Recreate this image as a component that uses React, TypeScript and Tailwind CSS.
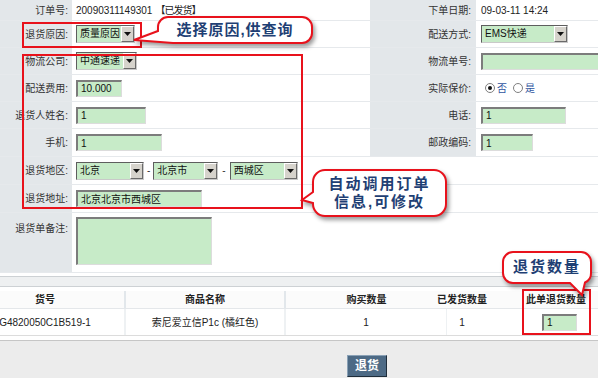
import React from "react";

const Arrow = () => (
  <svg width="7" height="4" viewBox="0 0 7 4">
    <path d="M0 0 H7 L3.5 4 Z" fill="#111" />
  </svg>
);

const Sel = ({ w, text }: { w: string; text: string }) => (
  <div
    className={`flex h-[18px] border border-t-[#5e5e5e] border-l-[#5e5e5e] border-r-[#c9c9c9] border-b-[#c9c9c9] bg-[#c7ebc8] ${w}`}
  >
    <span className="flex-1 pl-[3px] text-[10px] leading-[16px] text-[#111] whitespace-nowrap overflow-hidden">{text}</span>
    <span className="flex w-[13px] items-center justify-center border border-t-white border-l-white border-r-[#6a6a6a] border-b-[#6a6a6a] bg-[#d6d3cc]">
      <Arrow />
    </span>
  </div>
);

const Inp = ({ w, text, h = "h-[17px]" }: { w: string; text?: string; h?: string }) => (
  <div
    className={`flex items-center border-t-2 border-l-2 border-t-[#7c7c7c] border-l-[#7c7c7c] border-b border-r border-b-[#dcdcdc] border-r-[#dcdcdc] bg-[#c7ebc8] pl-[3px] text-[10px] text-[#111] whitespace-nowrap ${w} ${h}`}
  >
    {text}
  </div>
);

const Radio = ({ checked }: { checked?: boolean }) => (
  <span className="flex h-[10px] w-[10px] items-center justify-center rounded-full border border-[#7f7f7f] bg-white">
    {checked && <span className="h-[4px] w-[4px] rounded-full bg-[#111]" />}
  </span>
);

const L = ({ children }: { children: React.ReactNode }) => (
  <div className="flex items-center justify-end bg-[#e3e7ea] pr-[4px] text-[10px] text-[#333] whitespace-nowrap">{children}</div>
);
const L2 = ({ children }: { children: React.ReactNode }) => (
  <div className="flex items-center justify-end bg-[#e3e7ea] pr-[5px] text-[10px] text-[#333] whitespace-nowrap">{children}</div>
);
const V = ({ children }: { children?: React.ReactNode }) => (
  <div className="flex items-center pl-[4px] text-[10px] text-[#222] whitespace-nowrap">{children}</div>
);
const V2 = ({ children }: { children?: React.ReactNode }) => (
  <div className="flex items-center pl-[5px] text-[10px] text-[#222] whitespace-nowrap overflow-hidden">{children}</div>
);

const row = "grid grid-cols-[72px_298px_106px_122px] border-b border-[#e6e9ec]";
const row3 = "grid grid-cols-[72px_526px] border-b border-[#e6e9ec]";

export default function App() {
  return (
    <div className="relative h-[378px] w-[598px] overflow-hidden bg-white font-['Liberation_Sans','Noto_Sans_CJK_SC',sans-serif]">
      {/* form */}
      <div className={`${row} h-[21px]`}>
        <L>订单号:</L>
        <V>
          <span>20090311149301</span>
          <span className="ml-[3px] tracking-[-1px]">【已发货】</span>
        </V>
        <L2>下单日期:</L2>
        <V2>09-03-11 14:24</V2>
      </div>
      <div className={`${row} h-[27px]`}>
        <L>退货原因:</L>
        <V>
          <Sel w="w-[59px]" text="质量原因" />
        </V>
        <L2>配送方式:</L2>
        <V2>
          <Sel w="w-[87px]" text="EMS快递" />
        </V2>
      </div>
      <div className={`${row} h-[27px]`}>
        <L>物流公司:</L>
        <V>
          <Sel w="w-[61px]" text="中通速递" />
        </V>
        <L2>物流单号:</L2>
        <V2>
          <Inp w="w-[130px] shrink-0" />
        </V2>
      </div>
      <div className={`${row} h-[27px]`}>
        <L>配送费用:</L>
        <V>
          <Inp w="w-[46px]" text="10.000" />
        </V>
        <L2>实际保价:</L2>
        <V2>
          <div className="flex items-center pl-[4px]">
            <Radio checked />
            <span className="ml-[2px] text-[#2f54a0]">否</span>
            <span className="ml-[6px]">
              <Radio />
            </span>
            <span className="ml-[2px] text-[#2f54a0]">是</span>
          </div>
        </V2>
      </div>
      <div className={`${row} h-[27px]`}>
        <L>退货人姓名:</L>
        <V>
          <Inp w="w-[70px]" text="1" />
        </V>
        <L2>电话:</L2>
        <V2>
          <Inp w="w-[85px]" text="1" />
        </V2>
      </div>
      <div className={`${row} h-[28px]`}>
        <L>手机:</L>
        <V>
          <Inp w="w-[86px]" text="1" />
        </V>
        <L2>邮政编码:</L2>
        <V2>
          <Inp w="w-[52px]" text="1" />
        </V2>
      </div>
      <div className={`${row3} h-[28px]`}>
        <L>退货地区:</L>
        <V>
          <Sel w="w-[68px]" text="北京" />
          <span className="mx-[3px] text-[#333]">-</span>
          <Sel w="w-[65px]" text="北京市" />
          <span className="mx-[4px] text-[#333]">-</span>
          <Sel w="w-[68px]" text="西城区" />
        </V>
      </div>
      <div className={`${row3} h-[28px]`}>
        <L>退货地址:</L>
        <V>
          <Inp w="w-[126px]" text="北京北京市西城区" />
        </V>
      </div>
      <div className={`${row3} h-[60px]`}>
        <div className="flex justify-end bg-[#e3e7ea] pr-[4px] pt-[8px] text-[10px] text-[#333] whitespace-nowrap">退货单备注:</div>
        <div className="pl-[4px] pt-[4px]">
          <Inp w="w-[136px]" h="h-[48px]" />
        </div>
      </div>

      {/* separator band */}
      <div className="h-[3px]" />
      <div className="h-[11px] border-t border-b border-[#cdd1d4] bg-[#eef0f1]" />
      <div className="h-[4px]" />

      {/* product table */}
      <div className="grid h-[18px] grid-cols-[126px_160px_161px_30px_121px] border-b border-[#e4e7ea] bg-[#fbfbfb] text-[10px] font-bold text-[#222]">
        <div className="flex items-center justify-center border-r-2 border-[#e2e7eb] pr-[34px]">货号</div>
        <div className="flex items-center justify-center border-r-2 border-[#e2e7eb]">商品名称</div>
        <div className="flex items-center justify-center">购买数量</div>
        <div className="flex items-center justify-center whitespace-nowrap">已发货数量</div>
        <div className="flex items-center justify-center whitespace-nowrap pl-[37px]">此单退货数量</div>
      </div>
      <div className="grid h-[27px] grid-cols-[126px_160px_161px_30px_121px] border-b border-[#dcdcdc] text-[10px] text-[#222]">
        <div className="flex items-center justify-center border-r-2 border-[#eef1f3] pr-[34px] whitespace-nowrap">G4820050C1B519-1</div>
        <div className="flex items-center justify-center border-r-2 border-[#eef1f3] whitespace-nowrap">索尼爱立信P1c (橘红色)</div>
        <div className="flex items-center justify-center border-r border-[#eef1f3]">1</div>
        <div className="flex items-center justify-center">1</div>
        <div className="flex items-center justify-center pl-[44px]">
          <Inp w="w-[35px]" text="1" />
        </div>
      </div>
      <div className="h-[5px] border-b border-[#c6c6c6]" />
      <div className="flex h-[40px] bg-[#ececec] pl-[347px] pt-[14px]">
        <button className="h-[22px] w-[40px] border border-t-[#8aa1b6] border-l-[#8aa1b6] border-r-[#1f2d3a] border-b-[#1f2d3a] bg-[#4d6a85] text-[12px] font-bold text-white">
          退货
        </button>
      </div>

      {/* red highlight boxes */}
      <div className="absolute left-[22px] top-[22px] h-[26px] w-[120px] border-2 border-[#e8121c]" />
      <div className="absolute left-[22px] top-[54px] h-[155px] w-[281px] border-2 border-[#e8121c]" />
      <div className="absolute left-[522px] top-[289px] h-[46px] w-[69px] border-2 border-[#e8121c]" />

      {/* callout 1 */}
      <svg className="absolute left-[125px] top-[10px] drop-shadow-[2px_3px_2px_rgba(0,0,0,0.4)]" width="200" height="45" viewBox="0 0 200 45">
        <path
          d="M43 7 H177 A10 10 0 0 1 187 17 V23 A10 10 0 0 1 177 33 H48 L9 30 L33 21 V17 A10 10 0 0 1 43 7 Z"
          fill="#fff"
          stroke="#e8121c"
          strokeWidth="2"
        />
      </svg>
      <div className="absolute left-[158px] top-[17px] flex h-[26px] w-[154px] items-center justify-center text-[15px] font-bold tracking-[1px] text-[#1f3f74] whitespace-nowrap">
        选择原因,供查询
      </div>

      {/* callout 2 */}
      <svg className="absolute left-[298px] top-[165px] drop-shadow-[2px_3px_2px_rgba(0,0,0,0.4)]" width="155" height="58" viewBox="0 0 155 58">
        <path
          d="M27 5 H136 A12 12 0 0 1 148 17 V39 A12 12 0 0 1 136 51 H27 A12 12 0 0 1 15 39 V38 L4 35 L15 27 V17 A12 12 0 0 1 27 5 Z"
          fill="#fff"
          stroke="#e8121c"
          strokeWidth="2"
        />
      </svg>
      <div className="absolute left-[313px] top-[172px] flex h-[42px] w-[133px] flex-col items-center justify-center text-[15px] font-bold leading-[18px] tracking-[2px] text-[#1f3f74] whitespace-nowrap">
        <span>自动调用订单</span>
        <span>信息,可修改</span>
      </div>

      {/* callout 3 */}
      <svg className="absolute left-[498px] top-[248px] drop-shadow-[2px_3px_2px_rgba(0,0,0,0.4)]" width="100" height="52" viewBox="0 0 100 52">
        <path
          d="M15 4 H83 A10 10 0 0 1 93 14 V25 A10 10 0 0 1 87 34.5 L84 47 L72 35 H15 A10 10 0 0 1 5 25 V14 A10 10 0 0 1 15 4 Z"
          fill="#fff"
          stroke="#e8121c"
          strokeWidth="2"
        />
      </svg>
      <div className="absolute left-[503px] top-[252px] flex h-[31px] w-[88px] items-center justify-center text-[15px] font-bold tracking-[2px] text-[#1f3f74] whitespace-nowrap">
        退货数量
      </div>
    </div>
  );
}
